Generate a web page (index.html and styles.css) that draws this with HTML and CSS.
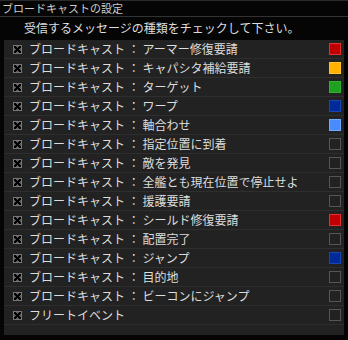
FILE: index.html
```html
<!DOCTYPE html>
<html lang="ja">

<head>
  <meta charset="UTF-8" />
  <title>ブロードキャストの設定</title>
  <link rel="stylesheet" href="styles.css">
</head>

<body>
  <div class="ventana">
    <div class="titulo">ブロードキャストの設定</div>
    <p class="instruccion">受信するメッセージの種類をチェックして下さい。</p>

    <ul class="lista">
      <li><span class="check"></span><span class="texto">ブロードキャスト ： アーマー修復要請</span><span class="color rojo"></span></li>
      <li><span class="check"></span><span class="texto">ブロードキャスト ： キャパシタ補給要請</span><span class="color naranja"></span></li>
      <li><span class="check"></span><span class="texto">ブロードキャスト ： ターゲット</span><span class="color verde"></span></li>
      <li><span class="check"></span><span class="texto">ブロードキャスト ： ワープ</span><span class="color azul"></span></li>
      <li><span class="check"></span><span class="texto">ブロードキャスト ： 軸合わせ</span><span class="color celeste"></span></li>
      <li><span class="check"></span><span class="texto">ブロードキャスト ： 指定位置に到着</span><span class="color"></span></li>
      <li><span class="check"></span><span class="texto">ブロードキャスト ： 敵を発見</span><span class="color"></span></li>
      <li><span class="check"></span><span class="texto">ブロードキャスト ： 全艦とも現在位置で停止せよ</span><span class="color"></span></li>
      <li><span class="check"></span><span class="texto">ブロードキャスト ： 援護要請</span><span class="color"></span></li>
      <li><span class="check"></span><span class="texto">ブロードキャスト ： シールド修復要請</span><span class="color rojo"></span></li>
      <li><span class="check"></span><span class="texto">ブロードキャスト ： 配置完了</span><span class="color"></span></li>
      <li><span class="check"></span><span class="texto">ブロードキャスト ： ジャンプ</span><span class="color azul"></span></li>
      <li><span class="check"></span><span class="texto">ブロードキャスト ： 目的地</span><span class="color"></span></li>
      <li><span class="check"></span><span class="texto">ブロードキャスト ： ビーコンにジャンプ</span><span class="color"></span></li>
      <li><span class="check"></span><span class="texto">フリートイベント</span><span class="color"></span></li>
    </ul>
  </div>
</body>

</html>
```

FILE: styles.css
```css
body {
  margin: 0;
  background-color: #000;
  color: #ddd;
  font-family: "Noto Sans CJK JP", "Noto Sans", sans-serif;
}

.ventana {
  width: 348px;
  height: 340px;
  background-color: #050505;
}

.titulo {
  height: 15px;
  line-height: 15px;
  padding-left: 2px;
  font-size: 11px;
  color: #ccc;
  border-top: 1px solid #2a2a2a;
  border-bottom: 1px solid #333;
}

.instruccion {
  margin: 0;
  height: 23px;
  line-height: 22px;
  padding-left: 24px;
  font-size: 12px;
  color: #ddd;
}

.lista {
  list-style: none;
  margin: 0 4px;
  padding: 0;
  height: 295px;
  background-color: #222;
}

.lista li {
  display: flex;
  align-items: center;
  height: 18px;
  border-bottom: 1px solid #2e2e2e;
  padding-left: 9px;
  padding-right: 3px;
}

.check {
  width: 9px;
  height: 9px;
  margin-right: 7px;
  background-color: #5a5a5a;
  background-image:
    linear-gradient(45deg, transparent 36%, #000 36%, #000 64%, transparent 64%),
    linear-gradient(-45deg, transparent 36%, #000 36%, #000 64%, transparent 64%);
  border: 1px solid #777;
  box-sizing: border-box;
}

.texto {
  flex: 1;
  font-size: 12px;
  line-height: 18px;
  white-space: nowrap;
  color: #ddd;
}

.color {
  width: 10px;
  height: 10px;
  border: 1px solid #555;
}

.rojo {
  background-color: #c00000;
  border-color: #e03030;
}

.naranja {
  background-color: #ffb000;
  border-color: #ffc030;
}

.verde {
  background-color: #20a020;
  border-color: #30b030;
}

.azul {
  background-color: #002a9a;
  border-color: #1a44b0;
}

.celeste {
  background-color: #4a8cff;
  border-color: #70a8ff;
}
```
